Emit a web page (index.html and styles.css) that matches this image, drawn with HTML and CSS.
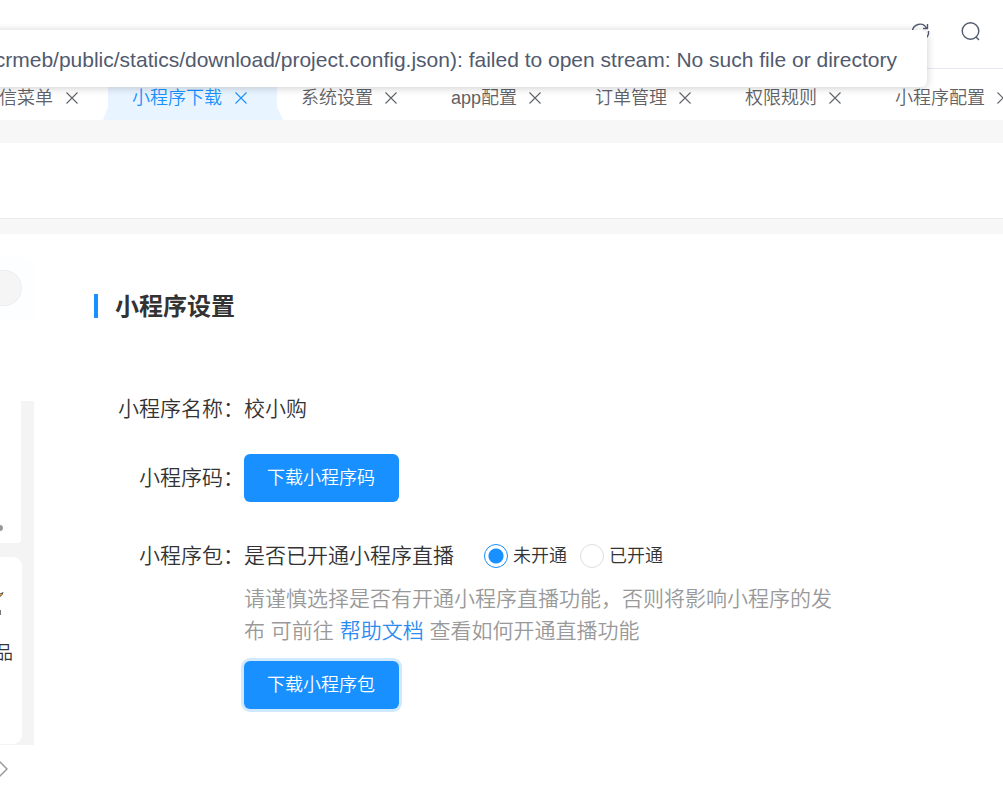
FILE: index.html
```html
<!DOCTYPE html>
<html lang="zh-CN">
<head>
  <meta charset="UTF-8">
  <meta name="viewport" content="width=device-width, initial-scale=1.0">
  <title>小程序下载</title>
  <link rel="stylesheet" href="styles.css">
</head>
<body>
  <!-- error message -->
  <div class="message" role="alert">
    <span>crmeb/public/statics/download/project.config.json): failed to open stream: No such file or directory</span>
  </div>

  <header class="header">
    <button class="icon-btn" aria-label="刷新">
      <svg width="20" height="20" viewBox="0 0 20 20">
        <path d="M1.500 10a7.500 7.500 0 0 1 14-4M16.500 2v4.500h-4.500M17.500 9a8 8 0 0 1-15 5" />
      </svg>
    </button>
    <button class="icon-btn" aria-label="搜索">
      <svg width="20" height="20" viewBox="0 0 20 20">
        <circle cx="9.500" cy="9" r="8.300" />
        <path d="M15 15l3 3" />
      </svg>
    </button>
  </header>

  <nav class="tabs">
    <div class="tab"><a href="#">微信菜单</a><button class="close" aria-label="关闭"><svg width="12" height="12" viewBox="0 0 12 12"><path d="M.5.5l11 11M11.500.5l-11 11" /></svg></button></div>
    <div class="tab active"><a href="#">小程序下载</a><button class="close" aria-label="关闭"><svg width="12" height="12" viewBox="0 0 12 12"><path d="M.5.5l11 11M11.500.5l-11 11" /></svg></button></div>
    <div class="tab"><a href="#">系统设置</a><button class="close" aria-label="关闭"><svg width="12" height="12" viewBox="0 0 12 12"><path d="M.5.5l11 11M11.500.5l-11 11" /></svg></button></div>
    <div class="tab"><a href="#">app配置</a><button class="close" aria-label="关闭"><svg width="12" height="12" viewBox="0 0 12 12"><path d="M.5.5l11 11M11.500.5l-11 11" /></svg></button></div>
    <div class="tab"><a href="#">订单管理</a><button class="close" aria-label="关闭"><svg width="12" height="12" viewBox="0 0 12 12"><path d="M.5.5l11 11M11.500.5l-11 11" /></svg></button></div>
    <div class="tab"><a href="#">权限规则</a><button class="close" aria-label="关闭"><svg width="12" height="12" viewBox="0 0 12 12"><path d="M.5.5l11 11M11.500.5l-11 11" /></svg></button></div>
    <div class="tab"><a href="#">小程序配置</a><button class="close" aria-label="关闭"><svg width="12" height="12" viewBox="0 0 12 12"><path d="M.5.5l11 11M11.500.5l-11 11" /></svg></button></div>
  </nav>

  <div class="page-header"></div>

  <main class="content">
    <!-- phone preview -->
    <div class="phone">
      <div class="phone-top"><div class="capsule"></div></div>
      <div class="phone-body">
        <div class="banner"><span class="dot"></span></div>
        <div class="menu-card">
          <svg width="4" height="28" viewBox="0 0 4 28">
            <path d="M0 2.500l3.500-1.500-1 2.500L0 6z" fill="#333" />
            <path d="M0 3l2-.5v1L0 5z" fill="#e8a33a" />
            <path d="M0 19h1v5H0z" fill="#777" />
          </svg>
          <span class="menu-name">商品</span>
        </div>
      </div>
      <svg class="phone-nav" width="18" height="18" viewBox="0 0 18 18">
        <path d="M9 1l8 8-8 8-8-8z" />
      </svg>
    </div>

    <section class="settings">
      <h2 class="title">小程序设置</h2>
      <form class="form">
        <div class="row">
          <span class="label">小程序名称：</span>
          <span>校小购</span>
        </div>
        <div class="row row-code">
          <span class="label">小程序码：</span>
          <button type="button" class="btn">下载小程序码</button>
        </div>
        <div class="row">
          <span class="label">小程序包：</span>
          <div class="package">
            <div class="live" role="radiogroup" aria-labelledby="live-label">
              <span id="live-label" class="live-label">是否已开通小程序直播</span>
              <label class="radio"><input type="radio" name="live" checked>未开通</label>
              <label class="radio"><input type="radio" name="live">已开通</label>
            </div>
            <p class="hint">请谨慎选择是否有开通小程序直播功能，否则将影响小程序的发布 可前往 <a href="#">帮助文档</a> 查看如何开通直播功能</p>
            <button type="button" class="btn btn-focus">下载小程序包</button>
          </div>
        </div>
      </form>
    </section>
  </main>
</body>
</html>
```
FILE: styles.css
```css
* {
  box-sizing: border-box;
}

body {
  margin: 0;
  min-height: 100vh;
  display: flex;
  flex-direction: column;
  overflow: hidden;
  background: #f7f7f7;
  color: #333;
  font-family: "Liberation Sans", "Noto Sans CJK SC", sans-serif;
  font-size: 21px;
  font-weight: 350;
  line-height: 32px;
}

button {
  font-family: inherit;
  font-weight: inherit;
  border: none;
  padding: 0;
  cursor: pointer;
}

a {
  color: inherit;
  text-decoration: none;
}

svg {
  display: block;
  fill: none;
}

/* message */
.message {
  position: absolute;
  z-index: 10;
  top: 30px;
  left: -10px;
  right: 76px;
  height: 57px;
  padding: 2px 30px 0;
  display: flex;
  justify-content: flex-end;
  align-items: center;
  white-space: nowrap;
  background: #fff;
  color: #515a6e;
  border-radius: 6px;
  box-shadow: 0 1px 9px rgba(0, 0, 0, 0.2);
}

/* header */
.header {
  display: flex;
  justify-content: flex-end;
  align-items: flex-start;
  gap: 30px;
  height: 69px;
  padding: 22px 22px 0;
  background: #fff;
  border-bottom: 1px solid #e6e9f5;
}

.icon-btn {
  background: none;
}

.icon-btn svg {
  stroke: #515a6e;
  stroke-width: 1.4;
}

/* tabs */
.tabs {
  display: flex;
  height: 51px;
  padding-top: 7px;
  margin-left: -43px;
  background: #fff;
  color: #5f6266;
  font-size: 18px;
}

.tab {
  position: relative;
  z-index: 0;
  flex: none;
  display: flex;
  align-items: center;
  gap: 12px;
  padding: 0 30px 0 24px;
}

.tab.active,
.tab:first-child {
  gap: 13px;
}

.close {
  background: none;
  color: inherit;
}

.close svg {
  stroke: currentColor;
  stroke-width: 1.1;
}

.tab.active {
  color: #1890ff;
}

.tab.active::before {
  content: "";
  position: absolute;
  z-index: -1;
  inset: 0 -6px 0 -5px;
  background: #e8f4ff;
  clip-path: polygon(5px 0, calc(100% - 6px) 0, calc(100% - 6px) 31px, 100% 100%, 0 100%, 5px 31px);
}

.page-header {
  height: 76px;
  margin: 23px 0 15px;
  background: #fff;
  border-bottom: 1px solid #ebecee;
}

.content {
  flex: 1;
  display: flex;
  gap: 60px;
  background: #fff;
}

/* phone preview */
.phone {
  flex: none;
  width: 34px;
  padding-top: 23px;
  display: flex;
  flex-direction: column;
}

.phone-top {
  height: 63px;
  padding: 13px 12px 0 0;
  background: #fdfeff;
  border-top-right-radius: 12px;
}

.capsule {
  height: 36px;
  background: #f5f5f5;
  border: 1px solid #ededed;
  border-left: none;
  border-radius: 0 18px 18px 0;
}

.phone-body {
  margin-top: 81px;
  padding: 0 12px 1px 0;
  display: flex;
  flex-direction: column;
  gap: 14px;
  background: #f4f4f4;
}

.banner {
  height: 142px;
  margin-right: 1px;
  padding-bottom: 12px;
  display: flex;
  align-items: flex-end;
  background: #fff;
  border-bottom-right-radius: 4px;
}

.dot {
  width: 6px;
  height: 6px;
  margin-left: -3px;
  background: #999;
  border-radius: 50%;
}

.menu-card {
  height: 187px;
  padding: 34px 9px 0 0;
  display: flex;
  flex-direction: column;
  gap: 18px;
  background: #fff;
  border-radius: 0 9px 9px 0;
}

.menu-name {
  align-self: flex-end;
  font-size: 18px;
  white-space: nowrap;
}

.phone-nav {
  margin: 15px 0 0 -10px;
  stroke: #999;
  stroke-width: 1.5;
}

/* settings */
.settings {
  flex: 1;
  padding: 60px 24px 24px 0;
}

.title {
  margin: 0;
  padding-left: 17px;
  border-left: 4px solid #1890ff;
  font-size: 24px;
  line-height: 26px;
  height: 24px;
}

.form {
  padding: 75px 0 0 24px;
  display: flex;
  flex-direction: column;
  gap: 29px;
}

.row {
  display: flex;
}

.label {
  flex: none;
  width: 126px;
  text-align: right;
}

.row-code {
  align-items: center;
  margin-bottom: 9px;
}

.btn {
  height: 48px;
  padding: 0 24px 4px 23px;
  background: #1890ff;
  color: #fff;
  font-size: 18px;
  border-radius: 6px;
}

.btn-focus {
  box-shadow: 0 0 0 3px rgba(24, 144, 255, 0.2);
}

.package {
  max-width: 600px;
}

.live {
  display: flex;
  align-items: center;
}

.live-label {
  margin-right: 30px;
}

.radio {
  display: flex;
  align-items: center;
  gap: 5px;
  margin-right: 13px;
  font-size: 18px;
}

.radio input {
  appearance: none;
  width: 24px;
  height: 24px;
  margin: 0;
  background: #fff;
  border: 1px solid #dcdee2;
  border-radius: 50%;
}

.radio input:checked {
  border-color: #1890ff;
  background: radial-gradient(circle, #1890ff 7px, #fff 8px);
}

.hint {
  margin: 11px 0 14px;
  color: #999;
}

.hint a {
  color: #2d8cf0;
}
```
